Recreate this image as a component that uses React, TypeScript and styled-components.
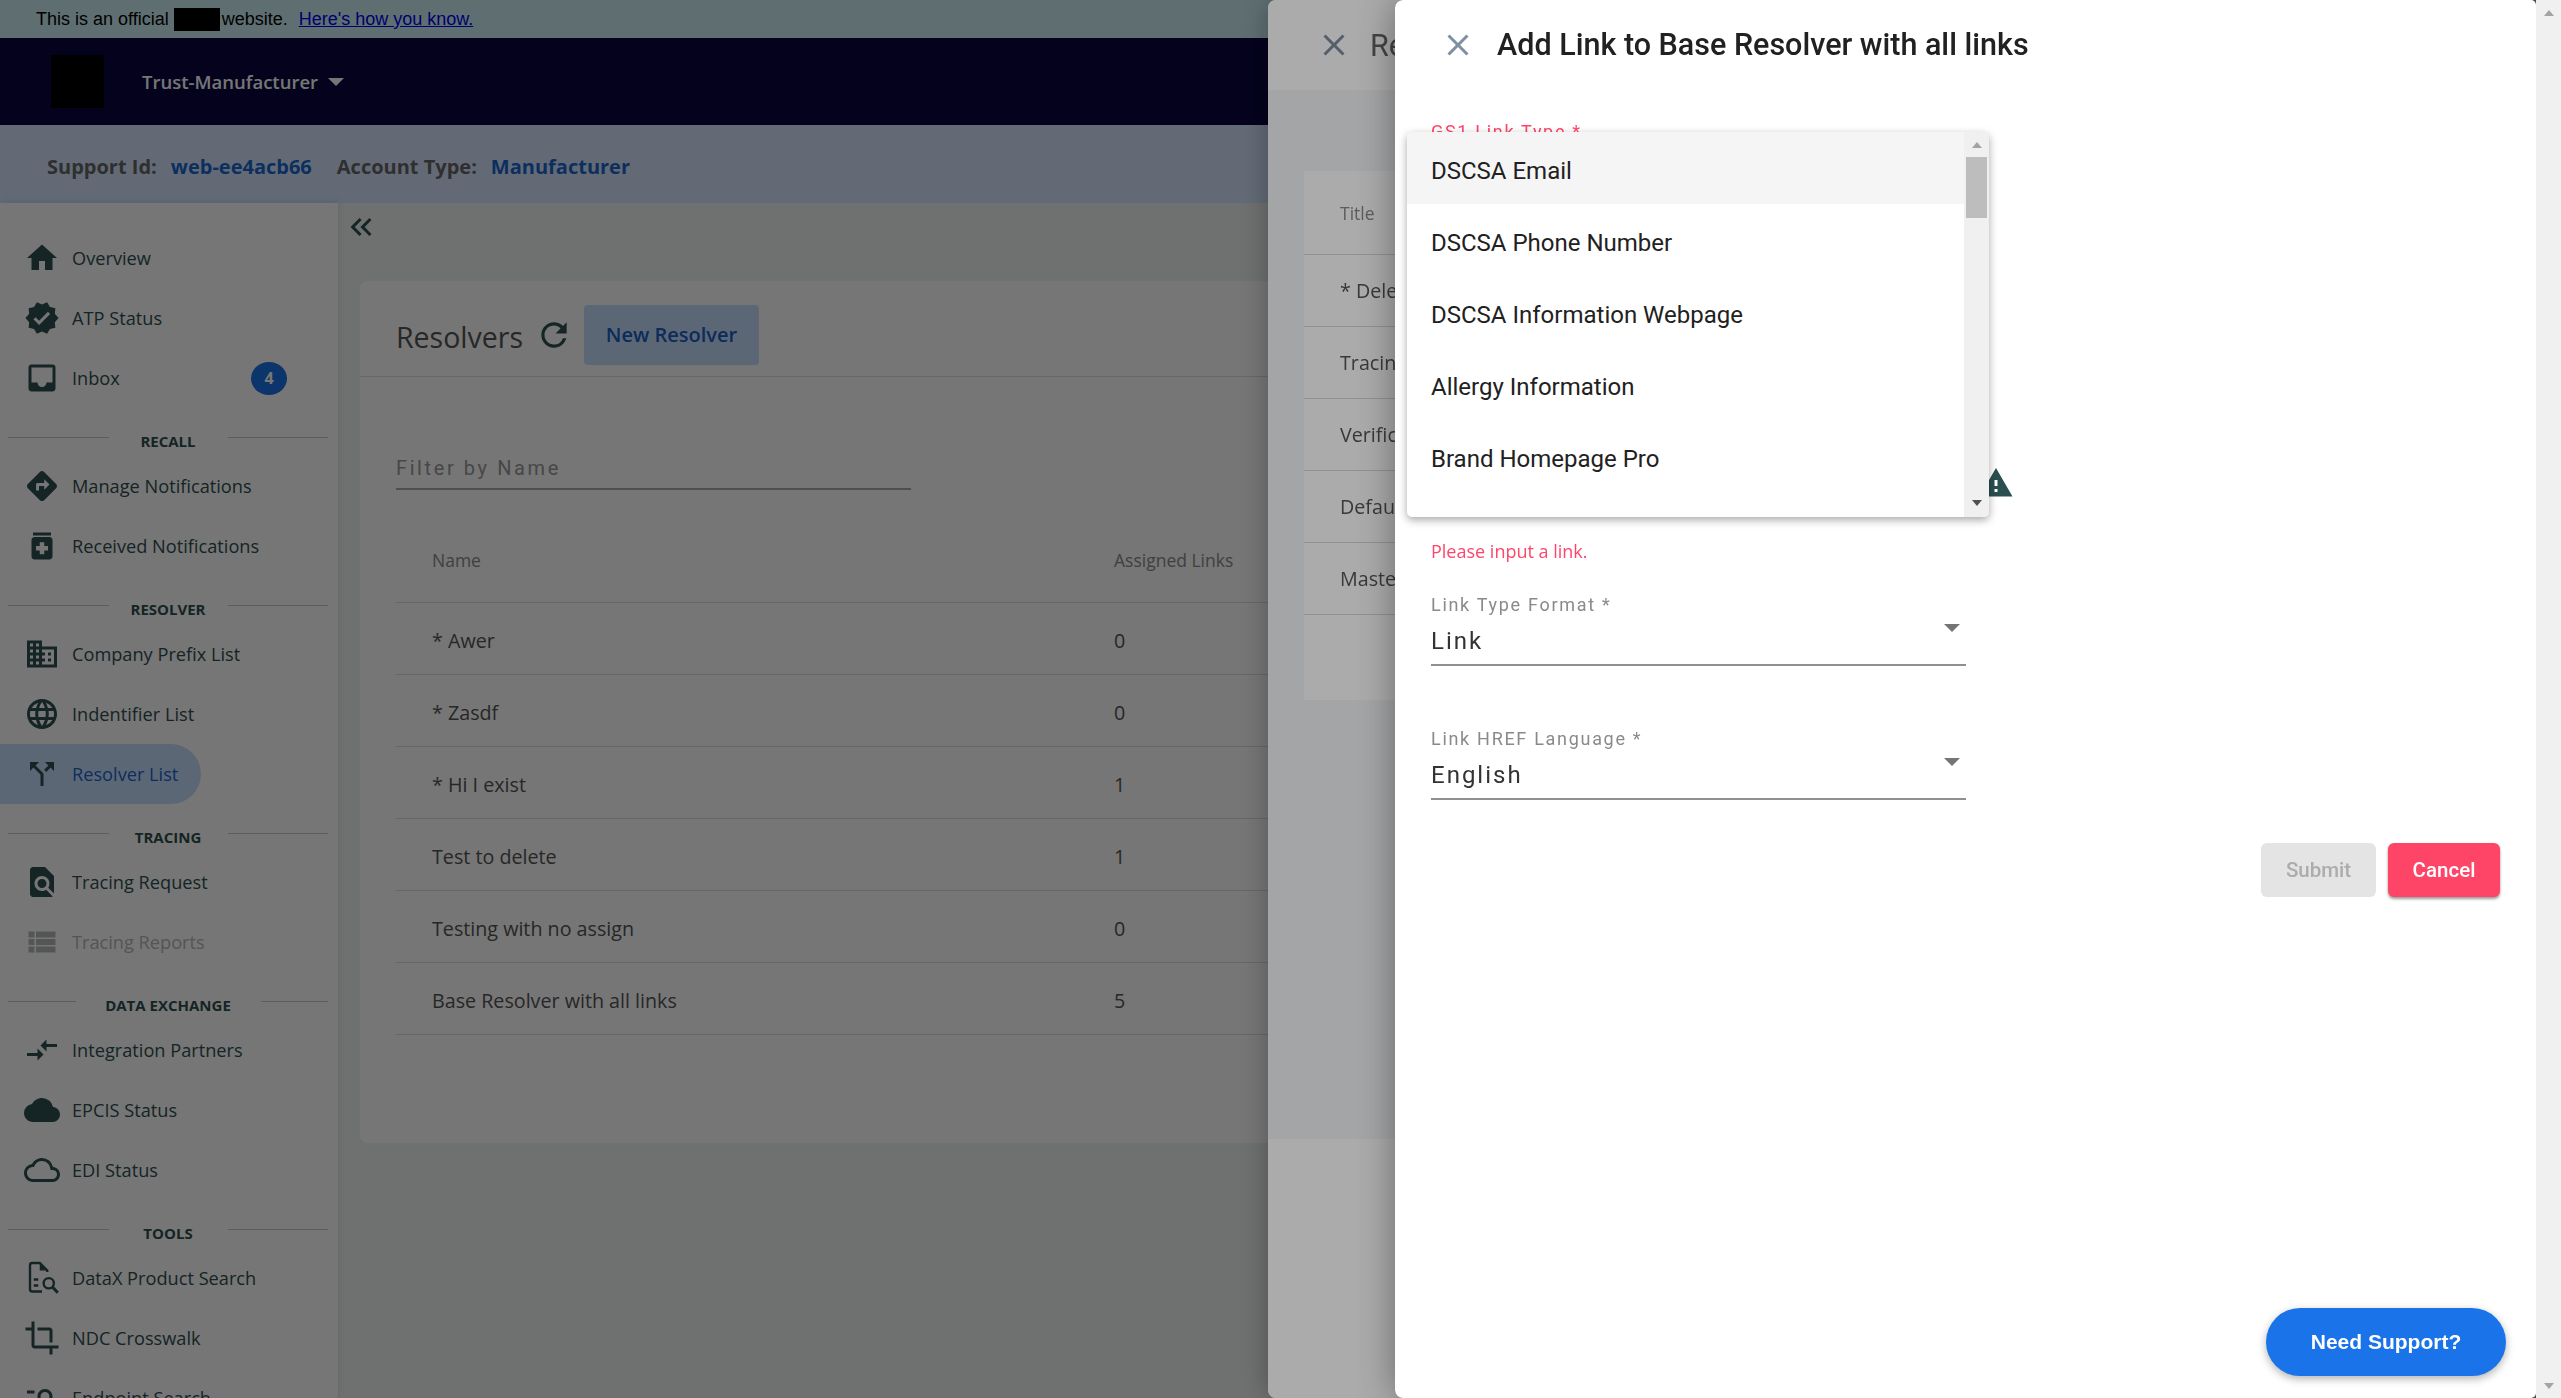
import React from "react";
import styled, { createGlobalStyle } from "styled-components";
import {
  MdHome,
  MdVerified,
  MdInbox,
  MdDirections,
  MdMedication,
  MdBusiness,
  MdLanguage,
  MdCallSplit,
  MdFindInPage,
  MdViewList,
  MdCompareArrows,
  MdCloud,
  MdOutlineCloud,
  MdCrop,
  MdManageSearch,
  MdRefresh,
  MdKeyboardDoubleArrowLeft,
  MdClose,
  MdWarning,
} from "react-icons/md";

const slate = "#2f4f4f";

const GlobalStyle = createGlobalStyle`
  html, body {
    margin: 0;
    height: 100%;
    overflow: hidden;
    background: #eff1f1;
    font-family: "Open Sans", sans-serif;
  }
  * { box-sizing: border-box; }
`;

const Page = styled.div`
  width: 2561px;
  height: 1398px;
  overflow: hidden;
  display: flex;
  flex-direction: column;
`;

const Banner = styled.div`
  height: 38px;
  flex: none;
  padding-left: 36px;
  display: flex;
  align-items: center;
  background: #cdeff5;
  font-family: "Liberation Sans", Arial, sans-serif;
  font-size: 18px;
  color: #000;
`;

const Redacted = styled.span`
  display: inline-block;
  width: 46px;
  height: 23px;
  margin: 0 2px 0 5px;
  background: #000;
`;

const BannerLink = styled.a`
  margin-left: 11px;
  color: #0000ee;
  text-decoration: underline;
`;

const NavBar = styled.div`
  height: 87px;
  flex: none;
  padding-left: 51px;
  display: flex;
  align-items: center;
  background: #090540;
`;

const Logo = styled.div`
  width: 53px;
  height: 53px;
  background: #000;
`;

const AccountName = styled.span`
  margin-left: 38px;
  font-size: 18.5px;
  font-weight: 600;
  color: #fff;
`;

const Caret = styled.span<{ $color?: string }>`
  display: inline-block;
  width: 0;
  height: 0;
  border-left: 8px solid transparent;
  border-right: 8px solid transparent;
  border-top: 8px solid ${(p) => p.$color || "#fff"};
`;

const AccountCaret = styled(Caret)`
  margin-left: 10px;
`;

const SupportBar = styled.div`
  height: 78px;
  flex: none;
  padding: 5px 0 0 47px;
  display: flex;
  align-items: center;
  background: #d5e6ff;
  font-size: 20px;
  font-weight: 700;
  color: #666;
`;

const SupportValue = styled.span`
  margin: 0 25px 0 14px;
  color: #1a66cc;
`;

const Body = styled.div`
  flex: 1;
  min-height: 0;
  display: flex;
`;

const Sidebar = styled.nav`
  width: 339px;
  flex: none;
  padding-top: 25px;
  background: #fff;
  border-right: 1px solid #e4e4e4;
  box-shadow: 0 -4px 8px rgba(0, 0, 0, 0.06);
  overflow: hidden;
`;

const NavRow = styled.div<{ $active?: boolean; $disabled?: boolean }>`
  width: ${(p) => (p.$active ? "201px" : "300px")};
  height: 60px;
  padding: 0 13px 0 24px;
  display: flex;
  align-items: center;
  gap: 12px;
  white-space: nowrap;
  font-size: 18.2px;
  border-radius: 0 30px 30px 0;
  color: ${(p) => (p.$active ? "#1a66cc" : p.$disabled ? "#b5b9b9" : slate)};
  background: ${(p) => (p.$active ? "#c8deff" : "transparent")};
  svg {
    flex: none;
    color: ${(p) => (p.$disabled ? "#b5b9b9" : slate)};
  }
`;

const NavBadge = styled.span`
  width: 36px;
  height: 33px;
  margin-left: auto;
  border-radius: 50%;
  display: flex;
  align-items: center;
  justify-content: center;
  background: #1a73e8;
  color: #fff;
  font-size: 16px;
  font-weight: 700;
`;

const SectionHead = styled.div`
  height: 48px;
  padding: 21px 10px 0 8px;
  display: flex;
  align-items: flex-start;
`;

const SectionRule = styled.span`
  flex: 1;
  height: 1px;
  margin-top: 8px;
  background: #c6c9c9;
`;

const SectionLabel = styled.span<{ $width: number }>`
  width: ${(p) => p.$width}px;
  text-align: center;
  line-height: 24px;
  font-size: 15px;
  font-weight: 700;
  color: ${slate};
`;

const Main = styled.main`
  flex: 1;
  min-width: 0;
  padding-left: 21px;
`;

const CollapseButton = styled.div`
  height: 78px;
  margin-left: -17px;
  padding-top: 6px;
  color: ${slate};
  font-size: 0;
`;

const Card = styled.section`
  height: 862px;
  width: 2160px;
  background: #fff;
  border-radius: 8px 0 0 8px;
`;

const CardHeader = styled.header`
  height: 96px;
  padding: 24px 36px 0;
  display: flex;
  align-items: flex-start;
  border-bottom: 1px solid #e0e0e0;
`;

const CardTitle = styled.h2`
  margin: 12px 0 0;
  font-size: 28.5px;
  font-weight: 400;
  line-height: 40px;
  color: #555;
`;

const RefreshIcon = styled.span`
  margin: 11px 11px 0 12px;
  color: ${slate};
  font-size: 0;
`;

const TintButton = styled.button`
  width: 175px;
  height: 60px;
  border: 0;
  border-radius: 4px;
  padding: 0 0 2px;
  background: #c8deff;
  color: #1a5fc0;
  font-family: inherit;
  font-size: 20px;
  font-weight: 600;
`;

const CardBody = styled.div`
  padding: 0 36px;
`;

const FilterBox = styled.div`
  width: 515px;
  height: 113px;
  padding-top: 79px;
  border-bottom: 2px solid #aaa;
  font-family: Roboto, sans-serif;
  font-size: 20px;
  letter-spacing: 2.6px;
  line-height: 24px;
  color: #9a9a9a;
`;

const TableRow = styled.div<{ $head?: boolean }>`
  height: ${(p) => (p.$head ? "113px" : "72px")};
  padding: ${(p) => (p.$head ? "58px" : "5px")} 0 0 36px;
  display: grid;
  grid-template-columns: 682px 1fr;
  align-items: ${(p) => (p.$head ? "start" : "center")};
  border-bottom: 1px solid #dcdcdc;
  font-size: ${(p) => (p.$head ? "17.5px" : "19.7px")};
  line-height: 24px;
  color: ${(p) => (p.$head ? "#8a8a8a" : "#555")};
`;

const Backdrop = styled.div<{ $alpha: number }>`
  position: fixed;
  inset: 0;
  background: rgba(0, 0, 0, ${(p) => p.$alpha});
`;

const ParentDrawer = styled.aside`
  position: fixed;
  top: 0;
  bottom: 0;
  left: 1268px;
  right: 0;
  display: flex;
  flex-direction: column;
  background: #f3f6f9;
  border-radius: 8px 0 0 8px;
  box-shadow: 0 0 30px rgba(0, 0, 0, 0.3);
  overflow: hidden;
`;

const ParentHeader = styled.header`
  height: 90px;
  flex: none;
  padding-left: 48px;
  display: flex;
  align-items: center;
  gap: 18px;
  background: #fff;
  color: #7d8fa0;
`;

const ParentTitle = styled.span`
  font-family: Roboto, sans-serif;
  font-size: 30.5px;
  color: #666;
`;

const ParentBody = styled.div`
  flex: 1;
  padding: 81px 0 0 36px;
`;

const ParentCard = styled.div`
  height: 529px;
  background: #fff;
`;

const ParentRow = styled.div<{ $head?: boolean }>`
  height: ${(p) => (p.$head ? "84px" : "72px")};
  padding-left: 36px;
  display: flex;
  align-items: center;
  border-bottom: 1px solid #d8d8d8;
  font-size: ${(p) => (p.$head ? "17.5px" : "19.7px")};
  color: ${(p) => (p.$head ? "#8a8a8a" : "#555")};
`;

const ParentFooter = styled.footer`
  height: 259px;
  flex: none;
  background: #fff;
`;

const Drawer = styled.aside`
  position: fixed;
  top: 0;
  bottom: 0;
  left: 1395px;
  right: 0;
  display: flex;
  background: #4a4a4a;
  border-radius: 8px 0 0 8px;
  box-shadow: 0 0 36px rgba(0, 0, 0, 0.38);
  overflow: hidden;
`;

const DrawerContent = styled.div`
  flex: 1;
  min-width: 0;
  background: #fff;
  border-radius: 0 5px 5px 0;
  font-family: Roboto, sans-serif;
`;

const DrawerHeader = styled.header`
  height: 90px;
  padding-left: 45px;
  display: flex;
  align-items: center;
  gap: 21px;
  color: #7d8fa0;
`;

const DrawerTitle = styled.h1`
  margin: 0 0 1px;
  font-size: 30.5px;
  font-weight: 500;
  color: #212121;
`;

const Form = styled.form`
  width: 535px;
  margin-left: 36px;
  display: flex;
  flex-direction: column;
`;

const RequiredLabel = styled.div<{ $error?: boolean }>`
  line-height: 22px;
  font-size: 18px;
  letter-spacing: 1.7px;
  color: ${(p) => (p.$error ? "#ff4569" : "#8a8a8a")};
`;

const ErrorLabel = styled(RequiredLabel)`
  margin-top: 31px;
`;

const WarningRow = styled.div`
  height: 358px;
  margin-right: -48px;
  display: flex;
  justify-content: flex-end;
  align-items: flex-end;
  color: #2a4f50;
`;

const ErrorText = styled.div`
  margin-top: 38px;
  font-family: "Open Sans", sans-serif;
  font-size: 18px;
  line-height: 24px;
  color: #ff4569;
`;

const SelectField = styled.div`
  height: 72px;
  margin-top: 62px;
  position: relative;
  border-bottom: 2px solid #8f8f8f;
`;

const FirstSelectField = styled(SelectField)`
  margin-top: 31px;
`;

const SelectValue = styled.div`
  margin-top: 10px;
  line-height: 30px;
  font-size: 24px;
  letter-spacing: 2px;
  color: #333;
`;

const SelectCaret = styled.span`
  position: absolute;
  top: 30px;
  right: 6px;
  font-size: 0;
`;

const Actions = styled.div`
  margin: 43px 36px 0 0;
  display: flex;
  justify-content: flex-end;
  gap: 12px;
`;

const ActionButton = styled.button<{ $disabled?: boolean }>`
  width: ${(p) => (p.$disabled ? "115px" : "112px")};
  height: 54px;
  border: 0;
  border-radius: 6px;
  padding: 0;
  background: ${(p) => (p.$disabled ? "#e4e4e4" : "#ff4567")};
  color: ${(p) => (p.$disabled ? "#acacac" : "#fff")};
  box-shadow: ${(p) => (p.$disabled ? "none" : "0 2px 3px rgba(0,0,0,.4)")};
  font-family: Roboto, sans-serif;
  font-size: 20.5px;
  font-weight: 500;
`;

const ScrollTrack = styled.div`
  width: 25px;
  flex: none;
  padding: 10px 0 9px;
  display: flex;
  flex-direction: column;
  justify-content: space-between;
  align-items: center;
  background: #f0f0f0;
`;

const ScrollArrow = styled.span<{ $up?: boolean; $color: string }>`
  display: block;
  width: 0;
  height: 0;
  border-left: 5.5px solid transparent;
  border-right: 5.5px solid transparent;
  ${(p) => (p.$up ? "border-bottom" : "border-top")}: 6px solid ${(p) => p.$color};
`;

const Dropdown = styled.div`
  position: fixed;
  top: 132px;
  left: 1407px;
  width: 582px;
  height: 385px;
  display: flex;
  background: #fff;
  border-radius: 5px;
  box-shadow: 0 3px 8px rgba(0, 0, 0, 0.35);
  font-family: Roboto, sans-serif;
  overflow: hidden;
`;

const OptionList = styled.div`
  flex: 1;
`;

const Option = styled.div<{ $hover?: boolean }>`
  height: 72px;
  padding: 6px 0 0 24px;
  display: flex;
  align-items: center;
  background: ${(p) => (p.$hover ? "#f5f5f5" : "#fff")};
  font-size: 24px;
  color: #212121;
`;

const DropdownScroll = styled.div`
  width: 25px;
  flex: none;
  padding: 10px 0 11px;
  display: flex;
  flex-direction: column;
  align-items: center;
  background: #f0f0f0;
`;

const ScrollThumb = styled.div`
  width: 21px;
  height: 61px;
  margin-top: 9px;
  background: #bdbdbd;
`;

const ScrollFill = styled.div`
  flex: 1;
`;

const SupportButton = styled.button`
  position: fixed;
  top: 1308px;
  left: 2266px;
  width: 240px;
  height: 68px;
  border: 0;
  border-radius: 34px;
  padding: 0;
  background: #1a73e8;
  color: #fff;
  box-shadow: 0 3px 8px rgba(0, 0, 0, 0.3);
  font-family: "Liberation Sans", Arial, sans-serif;
  font-size: 21px;
  font-weight: 700;
`;

// doc with lines and a magnifier, no matching icon in the packs
const ProductSearchIcon = () => (
  <svg width="36" height="36" viewBox="0 0 24 24" fill="none" stroke="currentColor" strokeWidth="1.6">
    <path d="M15.5 8V7l-5-5H5.5A1.5 1.5 0 0 0 4 3.5v16A1.5 1.5 0 0 0 5.5 21H12" />
    <path d="M10.5 2v5h5z" fill="currentColor" stroke="none" />
    <path d="M6.5 13h3M6.5 17h3" />
    <circle cx="16.5" cy="15.5" r="3.4" />
    <path d="M19 18l3.5 3.8" strokeWidth="2" />
  </svg>
);

type NavEntry = {
  label: string;
  icon: React.ReactNode;
  badge?: string;
  active?: boolean;
  disabled?: boolean;
};

const icon = (I: React.ComponentType<{ size?: number }>) => <I size={36} />;

const navGroups: { title?: string; width?: number; items: NavEntry[] }[] = [
  {
    items: [
      { label: "Overview", icon: icon(MdHome) },
      { label: "ATP Status", icon: icon(MdVerified) },
      { label: "Inbox", icon: icon(MdInbox), badge: "4" },
    ],
  },
  {
    title: "RECALL",
    width: 119,
    items: [
      { label: "Manage Notifications", icon: icon(MdDirections) },
      { label: "Received Notifications", icon: icon(MdMedication) },
    ],
  },
  {
    title: "RESOLVER",
    width: 119,
    items: [
      { label: "Company Prefix List", icon: icon(MdBusiness) },
      { label: "Indentifier List", icon: icon(MdLanguage) },
      { label: "Resolver List", icon: icon(MdCallSplit), active: true },
    ],
  },
  {
    title: "TRACING",
    width: 119,
    items: [
      { label: "Tracing Request", icon: icon(MdFindInPage) },
      { label: "Tracing Reports", icon: icon(MdViewList), disabled: true },
    ],
  },
  {
    title: "DATA EXCHANGE",
    width: 185,
    items: [
      { label: "Integration Partners", icon: icon(MdCompareArrows) },
      { label: "EPCIS Status", icon: icon(MdCloud) },
      { label: "EDI Status", icon: icon(MdOutlineCloud) },
    ],
  },
  {
    title: "TOOLS",
    width: 119,
    items: [
      { label: "DataX Product Search", icon: <ProductSearchIcon /> },
      { label: "NDC Crosswalk", icon: icon(MdCrop) },
      { label: "Endpoint Search", icon: icon(MdManageSearch) },
    ],
  },
];

const resolvers = [
  { name: "* Awer", links: 0 },
  { name: "* Zasdf", links: 0 },
  { name: "* Hi I exist", links: 1 },
  { name: "Test to delete", links: 1 },
  { name: "Testing with no assign", links: 0 },
  { name: "Base Resolver with all links", links: 5 },
];

const linkTypes = [
  "DSCSA Email",
  "DSCSA Phone Number",
  "DSCSA Information Webpage",
  "Allergy Information",
  "Brand Homepage Pro",
];

const App = () => (
  <>
    <GlobalStyle />
    <Page>
      <Banner>
        This is an official
        <Redacted />
        website.
        <BannerLink>Here's how you know.</BannerLink>
      </Banner>
      <NavBar>
        <Logo />
        <AccountName>Trust-Manufacturer</AccountName>
        <AccountCaret />
      </NavBar>
      <SupportBar>
        Support Id:
        <SupportValue>web-ee4acb66</SupportValue>
        Account Type:
        <SupportValue>Manufacturer</SupportValue>
      </SupportBar>
      <Body>
        <Sidebar>
          {navGroups.map((group, i) => (
            <div key={i}>
              {group.title && (
                <SectionHead>
                  <SectionRule />
                  <SectionLabel $width={group.width || 119}>{group.title}</SectionLabel>
                  <SectionRule />
                </SectionHead>
              )}
              {group.items.map((item) => (
                <NavRow key={item.label} $active={item.active} $disabled={item.disabled}>
                  {item.icon}
                  {item.label}
                  {item.badge && <NavBadge>{item.badge}</NavBadge>}
                </NavRow>
              ))}
            </div>
          ))}
        </Sidebar>
        <Main>
          <CollapseButton>
            <MdKeyboardDoubleArrowLeft size={36} />
          </CollapseButton>
          <Card>
            <CardHeader>
              <CardTitle>Resolvers</CardTitle>
              <RefreshIcon>
                <MdRefresh size={38} />
              </RefreshIcon>
              <TintButton>New Resolver</TintButton>
            </CardHeader>
            <CardBody>
              <FilterBox>Filter by Name</FilterBox>
              <TableRow $head>
                <span>Name</span>
                <span>Assigned Links</span>
              </TableRow>
              {resolvers.map((r) => (
                <TableRow key={r.name}>
                  <span>{r.name}</span>
                  <span>{r.links}</span>
                </TableRow>
              ))}
            </CardBody>
          </Card>
        </Main>
      </Body>
    </Page>
    <Backdrop $alpha={0.31} />
    <ParentDrawer>
      <ParentHeader>
        <MdClose size={36} />
        <ParentTitle>Resolver</ParentTitle>
      </ParentHeader>
      <ParentBody>
        <ParentCard>
          <ParentRow $head>Title</ParentRow>
          <ParentRow>* Delete</ParentRow>
          <ParentRow>Tracing</ParentRow>
          <ParentRow>Verification</ParentRow>
          <ParentRow>Default</ParentRow>
          <ParentRow>Master</ParentRow>
        </ParentCard>
      </ParentBody>
      <ParentFooter />
    </ParentDrawer>
    <Backdrop $alpha={0.33} />
    <Drawer>
      <DrawerContent>
        <DrawerHeader>
          <MdClose size={36} />
          <DrawerTitle>Add Link to Base Resolver with all links</DrawerTitle>
        </DrawerHeader>
        <Form>
          <ErrorLabel $error>GS1 Link Type *</ErrorLabel>
          <WarningRow>
            <MdWarning size={36} />
          </WarningRow>
          <ErrorText>Please input a link.</ErrorText>
          <FirstSelectField>
            <RequiredLabel>Link Type Format *</RequiredLabel>
            <SelectValue>Link</SelectValue>
            <SelectCaret>
              <Caret $color="#757575" />
            </SelectCaret>
          </FirstSelectField>
          <SelectField>
            <RequiredLabel>Link HREF Language *</RequiredLabel>
            <SelectValue>English</SelectValue>
            <SelectCaret>
              <Caret $color="#757575" />
            </SelectCaret>
          </SelectField>
        </Form>
        <Actions>
          <ActionButton $disabled>Submit</ActionButton>
          <ActionButton>Cancel</ActionButton>
        </Actions>
      </DrawerContent>
      <ScrollTrack>
        <ScrollArrow $up $color="#a3a3a3" />
        <ScrollArrow $color="#a3a3a3" />
      </ScrollTrack>
    </Drawer>
    <Dropdown>
      <OptionList>
        {linkTypes.map((t, i) => (
          <Option key={t} $hover={i === 0}>
            {t}
          </Option>
        ))}
      </OptionList>
      <DropdownScroll>
        <ScrollArrow $up $color="#a3a3a3" />
        <ScrollThumb />
        <ScrollFill />
        <ScrollArrow $color="#505050" />
      </DropdownScroll>
    </Dropdown>
    <SupportButton>Need Support?</SupportButton>
  </>
);

export default App;
